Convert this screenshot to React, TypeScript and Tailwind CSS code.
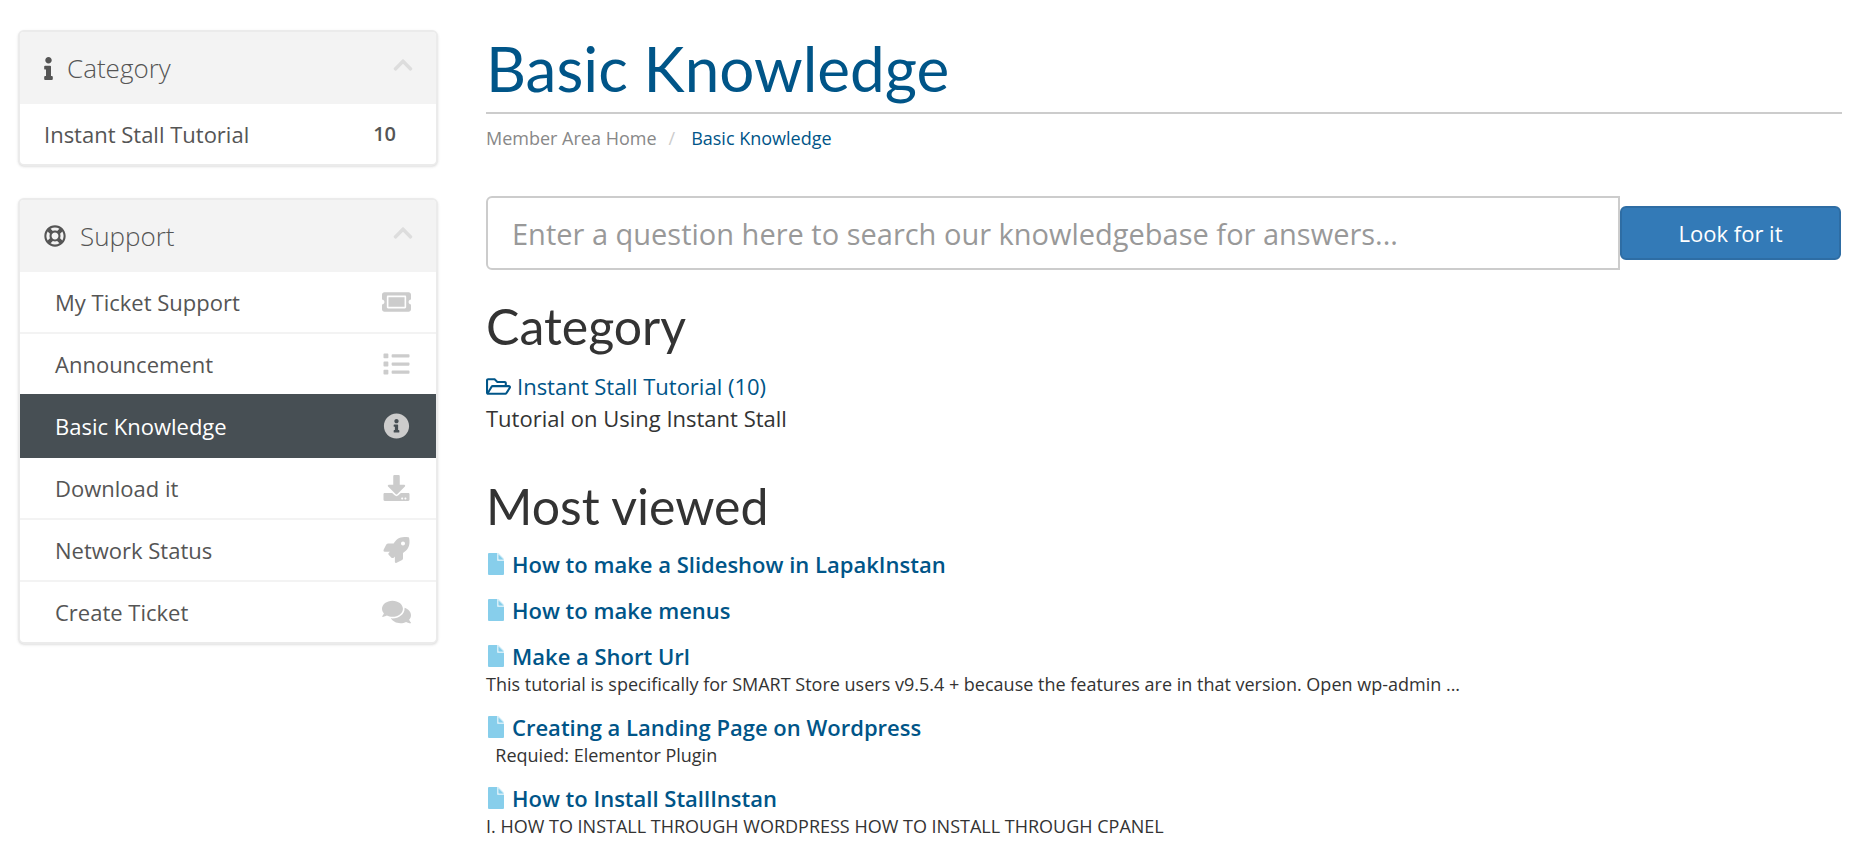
import {
  FaChevronUp,
  FaComments,
  FaDownload,
  FaInfo,
  FaInfoCircle,
  FaList,
  FaRegFolderOpen,
  FaRegLifeRing,
  FaRocket,
  FaTicketAlt,
} from "react-icons/fa";

const supportLinks = [
  { label: "My Ticket Support", icon: FaTicketAlt },
  { label: "Announcement", icon: FaList },
  { label: "Basic Knowledge", icon: FaInfoCircle, active: true },
  { label: "Download it", icon: FaDownload },
  { label: "Network Status", icon: FaRocket },
  { label: "Create Ticket", icon: FaComments },
];

const articles = [
  { title: "How to make a Slideshow in LapakInstan" },
  { title: "How to make menus" },
  {
    title: "Make a Short Url",
    text: "This tutorial is specifically for SMART Store users v9.5.4 + because the features are in that version. Open wp-admin ...",
  },
  { title: "Creating a Landing Page on Wordpress", text: "\u00a0\u00a0Requied: Elementor Plugin" },
  { title: "How to Install StallInstan", text: "I. HOW TO INSTALL THROUGH WORDPRESS HOW TO INSTALL THROUGH CPANEL" },
];

function FileIcon() {
  return (
    <svg viewBox="-2 0 18 22" className="h-[22px] w-[18px] shrink-0 fill-[#87ceeb]" aria-hidden="true">
      <path d="M0 1Q0 0 1 0H9V7Q9 8 10 8H16V21Q16 22 15 22H1Q0 22 0 21Z" />
      <path d="M10.500 1.500L15.500 6.500H11.500Q10.500 6.500 10.500 5.500Z" />
      <path d="M9 0H10.500L16 5.500V8H9Z" opacity="0.35" />
    </svg>
  );
}

function Panel({ title, icon, children }: { title: string; icon: React.ReactNode; children: React.ReactNode }) {
  return (
    <section className="overflow-hidden rounded-md border-2 border-[#ebebeb] bg-white shadow-sm">
      <div className="flex h-[72px] items-center gap-3.5 bg-[#f3f3f3] pr-[22px] pl-6">
        {icon}
        <h3 className="grow text-[26px] leading-9 font-light">{title}</h3>
        <button type="button" aria-label={`Collapse ${title}`} className="mb-1.5 text-[#ddd]">
          <FaChevronUp size={22} />
        </button>
      </div>
      {children}
    </section>
  );
}

export default function App() {
  return (
    <div className="flex gap-12 bg-white pt-[30px] pr-5 pl-[18px] font-['Open_Sans',sans-serif] text-[#555]">
      <aside className="w-[420px] shrink-0 space-y-8">
        <Panel title="Category" icon={<FaInfo className="h-[23px] w-[9px]" />}>
          <a href="#" className="flex h-15 items-center justify-between pr-10 pl-6 text-[22px] leading-8">
            Instant Stall Tutorial
            <span className="text-xl font-semibold">10</span>
          </a>
        </Panel>

        <Panel title="Support" icon={<FaRegLifeRing className="size-[22px]" />}>
          <nav>
            {supportLinks.map(({ label, icon: Icon, active }) => (
              <a
                key={label}
                href="#"
                className={
                  active
                    ? "-mt-0.5 flex h-16 items-center justify-between bg-[#474f54] pr-[25px] pl-[35px] text-[22px] leading-8 text-white"
                    : "flex h-[62px] items-center justify-between border-b-2 border-[#f3f3f3] pr-[25px] pl-[35px] text-[22px] leading-8 last:h-15 last:border-b-0"
                }
              >
                {label}
                <Icon className="h-[26px] w-[29px] text-[#ccc]" />
              </a>
            ))}
          </nav>
        </Panel>
      </aside>

      <main className="min-w-0 grow text-[#333]">
        <h1 className="mt-1.5 border-b-2 border-[#ccc] pb-3 font-['Lato',sans-serif] text-[62px] leading-16 text-[#058]">
          Basic Knowledge
        </h1>
        <nav aria-label="Breadcrumb" className="mt-3 flex text-lg leading-6 text-[#888]">
          <a href="#">Member Area Home</a>
          <span className="mr-4 ml-3 text-[#ccc]">/</span>
          <a href="#" className="text-[#058]">
            Basic Knowledge
          </a>
        </nav>

        <form className="mt-[46px] flex items-center pr-px" onSubmit={(e) => e.preventDefault()}>
          <input
            type="text"
            aria-label="Search the knowledgebase"
            placeholder="Enter a question here to search our knowledgebase for answers..."
            className="h-[74px] min-w-0 grow rounded-l-md border-2 border-[#ccc] px-6 text-[29px] text-[#555] placeholder:text-[#999]"
          />
          <button
            type="submit"
            className="h-[54px] w-[221px] shrink-0 rounded-md border-2 border-[#2e6da4] bg-[#337ab7] text-[22px] text-white"
          >
            Look for it
          </button>
        </form>

        <h2 className="mt-7 font-['Lato',sans-serif] text-[50px] leading-14">Category</h2>
        <div className="mt-4 text-[22px] leading-8">
          <a href="#" className="flex items-center gap-1.5 text-[#058]">
            <FaRegFolderOpen size={25} />
            Instant Stall Tutorial (10)
          </a>
          <p>Tutorial on Using Instant Stall</p>
        </div>

        <h2 className="mt-11 font-['Lato',sans-serif] text-[50px] leading-14">Most viewed</h2>
        <div className="mt-3.5 space-y-3.5">
          {articles.map(({ title, text }) => (
            <article key={title}>
              <a href="#" className="flex items-center gap-2 text-[22px] leading-8 font-semibold text-[#058]">
                <FileIcon />
                {title}
              </a>
              {text ? <p className="text-lg leading-[25px]">{text}</p> : null}
            </article>
          ))}
        </div>
      </main>
    </div>
  );
}
